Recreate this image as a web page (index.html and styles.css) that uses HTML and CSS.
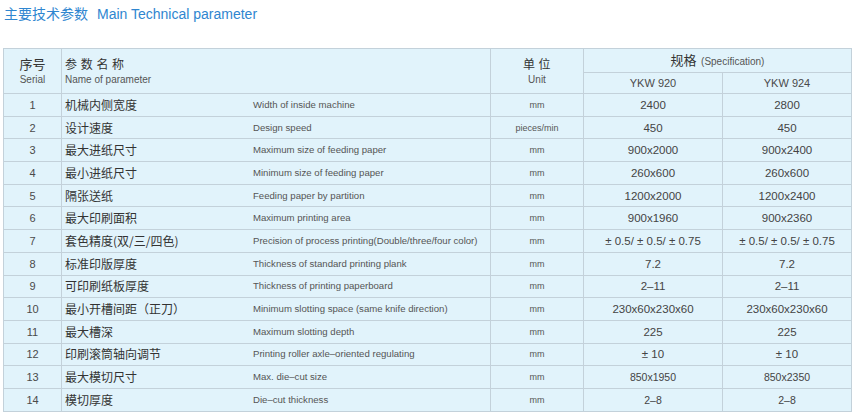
FILE: index.html
```html
<!DOCTYPE html>
<html lang="zh">
<head>
<meta charset="utf-8">
<title>主要技术参数</title>
<link rel="stylesheet" href="styles.css">
</head>
<body>
<h1 class="title"><span class="title-cn">主要技术参数</span><span class="title-en">Main Technical parameter</span></h1>
<table class="spec">
  <colgroup>
    <col class="c-serial"><col class="c-name"><col class="c-unit"><col class="c-m1"><col class="c-m2">
  </colgroup>
  <thead>
    <tr class="h1">
      <th rowspan="2" class="serial-h"><div class="cn">序号</div><div class="en">Serial</div></th>
      <th rowspan="2" class="name-h"><div class="cn spaced">参 数 名 称</div><div class="en">Name of parameter</div></th>
      <th rowspan="2" class="unit-h"><div class="cn spaced">单 位</div><div class="en">Unit</div></th>
      <th colspan="2" class="spec-h"><span class="cn">规格</span> <span class="en">(Specification)</span></th>
    </tr>
    <tr class="h2">
      <th class="model">YKW 920</th>
      <th class="model">YKW 924</th>
    </tr>
  </thead>
  <tbody>
    <tr><td class="num">1</td><td class="name"><div class="nrow"><span class="ncn">机械内侧宽度</span><span class="nen">Width of inside machine</span></div></td><td class="unit">mm</td><td class="val">2400</td><td class="val">2800</td></tr>
    <tr><td class="num">2</td><td class="name"><div class="nrow"><span class="ncn">设计速度</span><span class="nen">Design speed</span></div></td><td class="unit">pieces/min</td><td class="val">450</td><td class="val">450</td></tr>
    <tr><td class="num">3</td><td class="name"><div class="nrow"><span class="ncn">最大进纸尺寸</span><span class="nen">Maximum size of feeding paper</span></div></td><td class="unit">mm</td><td class="val">900x2000</td><td class="val">900x2400</td></tr>
    <tr><td class="num">4</td><td class="name"><div class="nrow"><span class="ncn">最小进纸尺寸</span><span class="nen">Minimum size of feeding paper</span></div></td><td class="unit">mm</td><td class="val">260x600</td><td class="val">260x600</td></tr>
    <tr><td class="num">5</td><td class="name"><div class="nrow"><span class="ncn">隔张送纸</span><span class="nen">Feeding paper by partition</span></div></td><td class="unit">mm</td><td class="val">1200x2000</td><td class="val">1200x2400</td></tr>
    <tr><td class="num">6</td><td class="name"><div class="nrow"><span class="ncn">最大印刷面积</span><span class="nen">Maximum printing area</span></div></td><td class="unit">mm</td><td class="val">900x1960</td><td class="val">900x2360</td></tr>
    <tr><td class="num">7</td><td class="name"><div class="nrow"><span class="ncn">套色精度(双/三/四色)</span><span class="nen">Precision of process printing(Double/three/four color)</span></div></td><td class="unit">mm</td><td class="val">± 0.5/ ± 0.5/ ± 0.75</td><td class="val">± 0.5/ ± 0.5/ ± 0.75</td></tr>
    <tr><td class="num">8</td><td class="name"><div class="nrow"><span class="ncn">标准印版厚度</span><span class="nen">Thickness of standard printing plank</span></div></td><td class="unit">mm</td><td class="val">7.2</td><td class="val">7.2</td></tr>
    <tr><td class="num">9</td><td class="name"><div class="nrow"><span class="ncn">可印刷纸板厚度</span><span class="nen">Thickness of printing paperboard</span></div></td><td class="unit">mm</td><td class="val">2–11</td><td class="val">2–11</td></tr>
    <tr><td class="num">10</td><td class="name"><div class="nrow"><span class="ncn">最小开槽间距（正刀）</span><span class="nen">Minimum slotting space (same knife direction)</span></div></td><td class="unit">mm</td><td class="val">230x60x230x60</td><td class="val">230x60x230x60</td></tr>
    <tr><td class="num">11</td><td class="name"><div class="nrow"><span class="ncn">最大槽深</span><span class="nen">Maximum slotting depth</span></div></td><td class="unit">mm</td><td class="val">225</td><td class="val">225</td></tr>
    <tr><td class="num">12</td><td class="name"><div class="nrow"><span class="ncn">印刷滚筒轴向调节</span><span class="nen">Printing roller axle–oriented regulating</span></div></td><td class="unit">mm</td><td class="val">± 10</td><td class="val">± 10</td></tr>
    <tr><td class="num">13</td><td class="name"><div class="nrow"><span class="ncn">最大模切尺寸</span><span class="nen">Max. die–cut size</span></div></td><td class="unit">mm</td><td class="val small">850x1950</td><td class="val small">850x2350</td></tr>
    <tr><td class="num">14</td><td class="name"><div class="nrow"><span class="ncn">模切厚度</span><span class="nen">Die–cut thickness</span></div></td><td class="unit">mm</td><td class="val small">2–8</td><td class="val small">2–8</td></tr>
  </tbody>
</table>
</body>
</html>
```
FILE: styles.css
```css
html, body {
  margin: 0;
  padding: 0;
  background: #ffffff;
}
body {
  font-family: "Liberation Sans", Arial, "Noto Sans CJK SC", sans-serif;
  color: #4a4a4a;
}
.title {
  margin: 0;
  padding: 4px 0 0 4px;
  height: 48px;
  box-sizing: border-box;
  font-weight: normal;
  font-size: 14px;
  line-height: 18px;
  color: #2f86d0;
}
.title-cn {
  font-family: "Noto Sans CJK SC", sans-serif;
  font-size: 14px;
  margin-right: 9px;
}
.title-en {
  font-size: 14px;
}
.spec {
  margin-left: 3px;
  width: 848px;
  table-layout: fixed;
  border-collapse: collapse;
  background: #e1f3fb;
  border: 1px solid #c3ccd2;
}
.c-serial { width: 58px; }
.c-name { width: 429px; }
.c-unit { width: 93px; }
.c-m1 { width: 139px; }
.c-m2 { width: 129px; }
.spec th, .spec td {
  border: 1px solid #c3d1da;
  padding: 0;
  font-weight: normal;
  white-space: nowrap;
  overflow: hidden;
  line-height: 14px;
}
.spec th {
  vertical-align: middle;
}
.h1 { height: 24px; }
.h2 { height: 21px; }
.cn {
  font-family: "Noto Sans CJK SC", sans-serif;
  color: #333;
  font-size: 12px;
  line-height: 16px;
}
.spaced { letter-spacing: 0.5px; }
.en {
  font-size: 10px;
  line-height: 16px;
  color: #555;
}
.serial-h {
  text-align: center;
  padding-top: 1px !important;
}
.serial-h .cn { font-size: 13px; }
.name-h, .unit-h {
  padding-top: 1px !important;
}
.name-h {
  text-align: left;
  padding-left: 3px !important;
}
.unit-h { text-align: center; }
.unit-h .cn { font-size: 12px; }
.spec-h {
  text-align: center;
  vertical-align: middle;
}
.spec-h .cn { font-size: 13px; }
.spec-h .en { font-size: 10px; }
.model {
  text-align: center;
  font-size: 11px;
  color: #4a4a4a;
}
.spec tbody tr { height: 22.7px; }
.num {
  text-align: center;
  font-size: 11px;
  color: #4a4a4a;
}
.name {
  padding-left: 3px !important;
}
.nrow {
  display: flex;
  align-items: center;
  height: 21px;
}
.ncn {
  width: 188px;
  flex: none;
  font-family: "Noto Sans CJK SC", sans-serif;
  font-size: 12px;
  line-height: 14px;
  color: #333;
}
.nen {
  font-size: 9.6px;
  line-height: 14px;
  color: #555;
}
.unit {
  text-align: center;
  font-size: 9px;
  color: #555;
}
.val {
  text-align: center;
  font-size: 11.5px;
  color: #444;
}
.val.small { font-size: 10.5px; }
```
